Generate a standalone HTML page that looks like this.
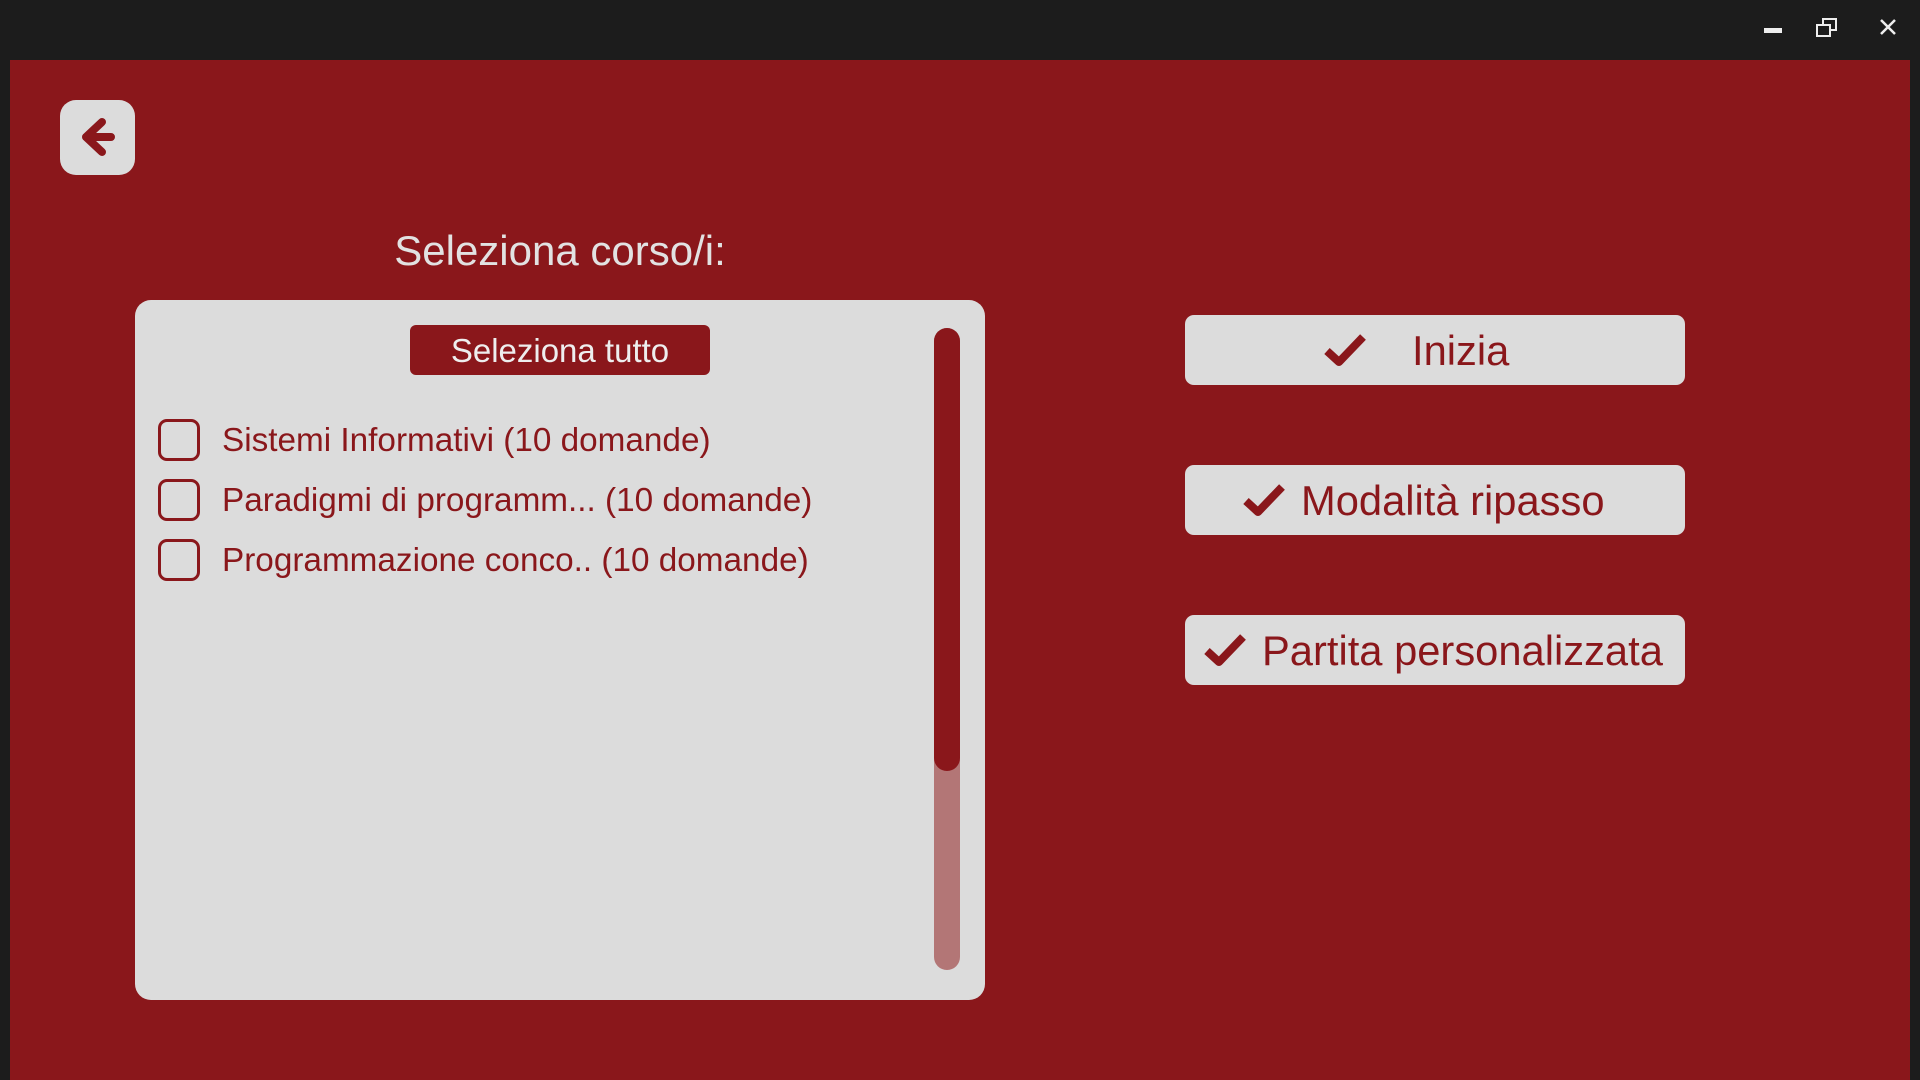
<!DOCTYPE html>
<html><head><meta charset="utf-8"><style>
*{margin:0;padding:0;box-sizing:border-box}
body{width:1920px;height:1080px;background:#1c1c1c;position:relative;overflow:hidden;font-family:"Liberation Sans",sans-serif}
.main{position:absolute;left:10px;top:60px;width:1900px;height:1020px;background:#8a171b}
.abs{position:absolute}
.back{left:60px;top:100px;width:75px;height:75px;background:#dcdcdc;border-radius:16px}
.title{left:260px;width:600px;top:227px;text-align:center;color:#e2e2e2;font-size:42px}
.panel{left:135px;top:300px;width:850px;height:700px;background:#dcdcdc;border-radius:16px}
.selall{left:410px;top:325px;width:300px;height:50px;background:#8a171b;border-radius:6px;color:#eee;font-size:33px;text-align:center;line-height:52px}
.cb{left:158px;width:42px;height:42px;border:3.5px solid #8a171b;border-radius:9px}
.lbl{left:222px;color:#8a171b;font-size:33.3px;line-height:42px}
.track{left:934px;top:328px;width:26px;height:642px;background:#b37676;border-radius:13px}
.thumb{left:934px;top:328px;width:26px;height:443px;background:#8a171b;border-radius:13px}
.btn{left:1185px;width:500px;height:70px;background:#dcdcdc;border-radius:9px}
.bt{color:#8a171b;font-size:41.7px;line-height:72px}
</style></head><body>
<svg class="abs" style="left:1760px;top:17px" width="160" height="30">
<rect x="4" y="11" width="18" height="5" fill="#eee"/>
<rect x="63" y="2" width="13" height="11" fill="none" stroke="#eee" stroke-width="2"/>
<rect x="57" y="8" width="13" height="11" fill="#1c1c1c" stroke="#eee" stroke-width="2"/>
<path d="M121 3 L135 17 M135 3 L121 17" stroke="#eee" stroke-width="2.5"/>
</svg>
<div class="main"></div>
<div class="abs back"><svg width="75" height="75"><path d="M26 37 H51 M42 22 L26 37 L42 52" fill="none" stroke="#8a171b" stroke-width="8" stroke-linecap="round" stroke-linejoin="round"/></svg></div>
<div class="abs title">Seleziona corso/i:</div>
<div class="abs panel"></div>
<div class="abs selall">Seleziona tutto</div>
<div class="abs cb" style="top:419px"></div><div class="abs lbl" style="top:420px">Sistemi Informativi (10 domande)</div>
<div class="abs cb" style="top:479px"></div><div class="abs lbl" style="top:480px">Paradigmi di programm... (10 domande)</div>
<div class="abs cb" style="top:539px"></div><div class="abs lbl" style="top:540px">Programmazione conco.. (10 domande)</div>
<div class="abs track"></div><div class="abs thumb"></div>
<div class="abs btn" style="top:315px"></div>
<div class="abs btn" style="top:465px"></div>
<div class="abs btn" style="top:615px"></div>
<svg class="abs" style="left:1323px;top:333px" width="44" height="34"><path d="M4 18 L16 29 L40 4" fill="none" stroke="#8a171b" stroke-width="8" stroke-linejoin="round"/></svg>
<div class="abs bt" style="left:1412px;top:315px">Inizia</div>
<svg class="abs" style="left:1242px;top:483px" width="44" height="34"><path d="M4 18 L16 29 L40 4" fill="none" stroke="#8a171b" stroke-width="8" stroke-linejoin="round"/></svg>
<div class="abs bt" style="left:1301px;top:465px">Modalità ripasso</div>
<svg class="abs" style="left:1203px;top:633px" width="44" height="34"><path d="M4 18 L16 29 L40 4" fill="none" stroke="#8a171b" stroke-width="8" stroke-linejoin="round"/></svg>
<div class="abs bt" style="left:1262px;top:615px">Partita personalizzata</div>
</body></html>
